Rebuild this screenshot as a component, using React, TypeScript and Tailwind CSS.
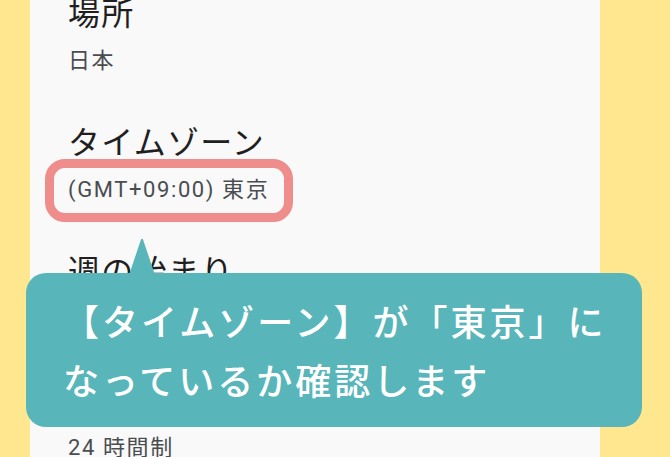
import React from "react";

const items = [
  { title: "場所", sub: "日本" },
  { title: "タイムゾーン", sub: "(GMT+09:00) 東京" },
  { title: "週の始まり", sub: "日曜日" },
  { title: "時刻の表示形式", sub: "24 時間制" },
];

export default function App() {
  return (
    <div
      className="relative w-[670px] h-[457px] overflow-hidden flex bg-[#fee78e]"
      style={{ fontFamily: 'Roboto, "Noto Sans CJK JP", sans-serif' }}
    >
      <div className="w-[30px] shrink-0" />
      <div className="w-[570px] shrink-0 bg-[#f9f9f9] pl-[38px]">
        <div className="-mt-[6px] flex flex-col">
          {items.map((it) => (
            <div key={it.title} className="flex flex-col pb-[47px]">
              <div className="h-[40px] leading-[40px] text-[32px] tracking-[1.2px] text-[#1f1f1f]">{it.title}</div>
              <div className="mt-[12px] h-[30px] leading-[30px] text-[22px] tracking-[1.6px] text-[#4a4d50]">{it.sub}</div>
            </div>
          ))}
        </div>
      </div>
      <div className="flex-1" />

      {/* highlight box */}
      <div className="absolute left-[45px] top-[159px] w-[248px] h-[63px] rounded-[20px] border-[9px] border-[#ee8d8b]" />

      {/* callout arrow */}
      <svg className="absolute left-[127px] top-[238px]" width="30" height="40" viewBox="0 0 30 40">
        <path d="M15 1 Q15.5 0.5 16 1.5 L29 40 L1 40 L14 1.5 Q14.5 0.5 15 1 Z" fill="#58b5b9" />
      </svg>

      {/* callout */}
      <div
        className="absolute left-[26px] top-[273px] w-[616px] h-[154px] rounded-[20px] bg-[#58b5b9] pl-[37px] flex flex-col justify-center text-white text-[36px] leading-[59px] font-medium tracking-[3px]"
        style={{ fontFamily: '"Noto Sans CJK JP", sans-serif' }}
      >
        <div>【タイムゾーン】が「東京」に</div>
        <div>なっているか確認します</div>
      </div>
    </div>
  );
}
